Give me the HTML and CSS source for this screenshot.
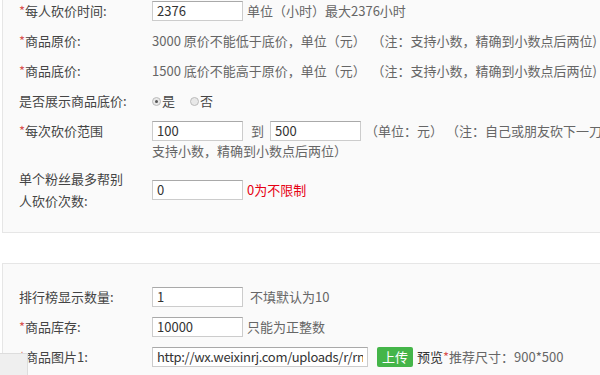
FILE: index.html
```html
<!DOCTYPE html>
<html lang="zh-CN">
<head>
  <meta charset="UTF-8">
  <meta name="viewport" content="width=device-width, initial-scale=1.0">
  <title>砍价活动设置</title>
  <link rel="stylesheet" href="styles.css">
</head>
<body>
  <div class="panel first">
    <div class="row">
      <label class="label"><i>*</i>每人砍价时间:</label>
      <div class="field">
        <input type="text" class="txt" value="2376">
        <span class="tip">单位（小时）最大2376小时</span>
      </div>
    </div>
    <div class="row">
      <label class="label"><i>*</i>商品原价:</label>
      <div class="field">
        <span class="note">3000 原价不能低于底价，单位（元）&nbsp;&nbsp;（注：支持小数，精确到小数点后两位)</span>
      </div>
    </div>
    <div class="row">
      <label class="label"><i>*</i>商品底价:</label>
      <div class="field">
        <span class="note">1500 底价不能高于原价，单位（元）&nbsp;&nbsp;（注：支持小数，精确到小数点后两位)</span>
      </div>
    </div>
    <div class="row">
      <label class="label">是否展示商品底价:</label>
      <div class="field">
        <span class="radio on"></span><span class="opt">是</span>
        <span class="radio"></span><span class="opt">否</span>
      </div>
    </div>
    <div class="row top">
      <label class="label"><i>*</i>每次砍价范围</label>
      <div class="field wide"><input type="text" class="txt" value="100"><span class="to">到</span><input type="text" class="txt" value="500"><span class="range">（单位：元）&nbsp;（注：自己或朋友砍下一刀的范围，支持小数，精确到小数点后两位）</span></div>
    </div>
    <div class="row fans">
      <label class="label narrow">单个粉丝最多帮别人砍价次数:</label>
      <div class="field">
        <input type="text" class="txt" value="0">
        <span class="red">0为不限制</span>
      </div>
    </div>
  </div>

  <div class="panel second">
    <div class="row">
      <label class="label">排行榜显示数量:</label>
      <div class="field">
        <input type="text" class="txt" value="1">
        <span class="tip">&nbsp;不填默认为10</span>
      </div>
    </div>
    <div class="row">
      <label class="label"><i>*</i>商品库存:</label>
      <div class="field">
        <input type="text" class="txt" value="10000">
        <span class="tip">只能为正整数</span>
      </div>
    </div>
    <div class="row">
      <label class="label"><i>*</i>商品图片1:</label>
      <div class="field">
        <input type="text" class="txt long" value="http://wx.weixinrj.com/uploads/r/rnmhkd/goods.jpg">
        <button class="upload">上传</button>
        <span class="preview">预览<i>*</i></span><span class="note">推荐尺寸：900*500</span>
      </div>
    </div>
  </div>

  <div class="corner"></div>
</body>
</html>
```

FILE: styles.css
```css
* {
  margin: 0;
  padding: 0;
  box-sizing: border-box;
}
html, body {
  width: 600px;
  height: 375px;
  overflow: hidden;
}
body {
  background: #fff;
  font-family: "Microsoft YaHei", "Noto Sans CJK SC", "Liberation Sans", sans-serif;
  font-size: 13px;
  color: #333;
}
i {
  font-style: normal;
  color: #d9534f;
}
.panel {
  width: 760px;
  margin-left: 2px;
  padding: 0 0 15px 16px;
  background: #fafafa;
  border: 1px solid #e6e6e6;
}
.panel.first {
  margin-top: -15px;
  padding-top: 10px;
}
.panel.second {
  margin-top: 30px;
  padding-top: 18px;
}
.row {
  display: flex;
  align-items: center;
  padding: 5px 0;
  min-height: 30px;
}
.row.top {
  align-items: flex-start;
}
.row.fans {
  padding-top: 2px;
}
.label {
  flex: none;
  width: 133px;
  line-height: 20px;
  color: #444;
}
.label.narrow {
  padding-right: 25px;
  line-height: 22px;
}
.field {
  display: flex;
  align-items: center;
  line-height: 20px;
}
.field.wide {
  display: block;
  width: 512px;
}
.field.wide .txt {
  vertical-align: top;
}
.txt {
  width: 91px;
  height: 20px;
  padding: 0 4px;
  border: 1px solid #ccc;
  border-top-color: #a9a9a9;
  background: #fff;
  font: inherit;
  color: #333;
  outline: none;
}
.txt.long {
  width: 216px;
  letter-spacing: -0.3px;
}
.note {
  color: #666;
}
.tip {
  color: #666;
  margin-left: 4px;
}
.to {
  display: inline-block;
  margin: 0 6px 0 8px;
  color: #666;
}
.range {
  margin-left: 4px;
  color: #666;
}
.red {
  color: #e60012;
  margin-left: 4px;
}
.radio {
  display: inline-block;
  width: 9px;
  height: 9px;
  border-radius: 50%;
  border: 1px solid #bbb;
  background: #e8e8e8;
  position: relative;
}
.radio.on::after {
  content: "";
  position: absolute;
  left: 2px;
  top: 2px;
  width: 3px;
  height: 3px;
  border-radius: 50%;
  background: #555;
}
.opt {
  margin: 0 15px 0 1px;
  color: #444;
}
.upload {
  width: 36px;
  height: 20px;
  margin: 0 4px 0 9px;
  border: none;
  border-radius: 2px;
  background: #44b549;
  color: #fff;
  font: inherit;
}
.preview {
  color: #333;
}
.corner {
  position: fixed;
  left: 0;
  bottom: 0;
  width: 28px;
  height: 22px;
  background: #efefef;
  border-top: 1px solid #ddd;
  border-right: 1px solid #ddd;
}
```
